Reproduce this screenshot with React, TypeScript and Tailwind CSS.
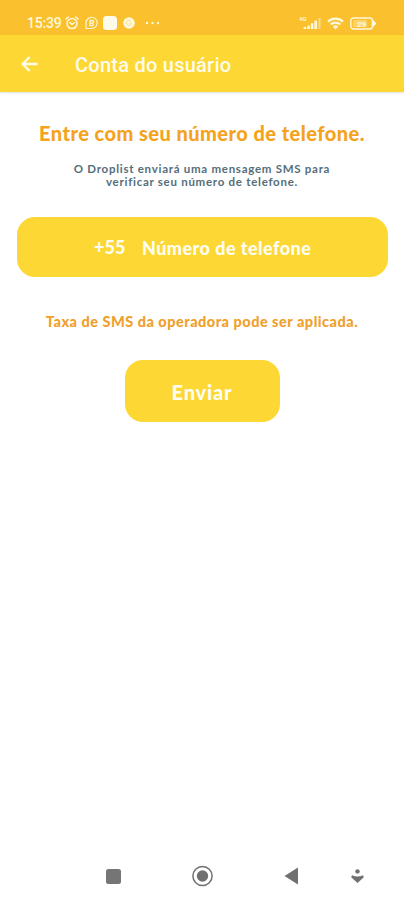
import React from 'react';

function StatusBar() {
  return (
    <div className="flex h-[35px] items-start justify-between bg-[#fbc02d] pl-[27px] pr-[27px] pt-[14px] text-[#fff8dc]">
      <div className="flex h-[18px] items-center">
        <span className="w-[35px] whitespace-nowrap font-['Roboto',sans-serif] text-[14px] font-medium leading-[18px] tracking-[-0.2px]">15:39</span>
        {/* alarm */}
        <svg className="ml-[3px] h-[14px] w-[14px]" viewBox="0 0 14 14" fill="none" stroke="currentColor" strokeWidth="1.5" strokeLinecap="round">
          <circle cx="7" cy="7.6" r="5" />
          <path d="M1 3 3.3 1M13 3 10.7 1M4.8 6.6 7 8.4 9.3 6.8" />
        </svg>
        {/* chat bubble */}
        <svg className="ml-[6px] h-[14px] w-[13px]" viewBox="0 0 13 14" fill="none" stroke="currentColor" strokeWidth="1.1">
          <path d="M1 12.5V7A5.6 5.6 0 1 1 6.6 12.5Z" />
          <path d="M5 10V4.5H7.2A1.3 1.3 0 0 1 7.2 7.2H5M7.2 7.2A1.3 1.3 0 0 1 7.2 9.7H5" strokeWidth="1.3" />
        </svg>
        <span className="ml-[5px] h-[14px] w-[14px] rounded-[3.5px] bg-[#fffbea]" />
        <svg className="ml-[6px] h-[12px] w-[12px]" viewBox="0 0 12 12">
          <circle cx="6" cy="6" r="5.8" fill="#fff8dc" />
          <path d="M8 4.3A2.6 2.6 0 1 0 8.4 6.5H6.2" fill="none" stroke="#fddf8c" strokeWidth="1" />
        </svg>
        <svg className="ml-[10px] h-[4px] w-[15px]" viewBox="0 0 15 4" fill="currentColor">
          <circle cx="2" cy="2" r="1.2" />
          <circle cx="7.5" cy="2" r="1.2" />
          <circle cx="13" cy="2" r="1.2" />
        </svg>
      </div>
      <div className="flex h-[18px] items-center">
        {/* signal */}
        <svg className="h-[14px] w-[23px]" viewBox="0 0 23 14" fill="currentColor">
          <text x="0" y="5.4" fontSize="6" fontFamily="Roboto, sans-serif">4G</text>
          <rect x="4.6" y="11" width="2.6" height="2" rx=".6" />
          <rect x="8.2" y="9.4" width="2.6" height="3.6" rx=".6" />
          <rect x="11.8" y="7.2" width="2.6" height="5.8" rx=".6" />
          <rect x="15.4" y="4.6" width="2.6" height="8.4" rx=".6" />
          <rect x="19.4" y="2" width="2.2" height="11" rx=".6" opacity=".45" />
        </svg>
        <svg className="ml-[5px] h-[13px] w-[17px]" viewBox="0 0 17 13" fill="none" stroke="currentColor" strokeWidth="2.2">
          <path d="M1 4.6A11 11 0 0 1 16 4.6M3.7 7.5A7 7 0 0 1 13.3 7.5" />
          <path d="M5.7 9.4A4.3 4.3 0 0 1 11.3 9.4L8.5 12.6Z" fill="currentColor" stroke="none" />
        </svg>
        <svg className="ml-[6px] h-[13px] w-[27px]" viewBox="0 0 27 13">
          <rect x=".9" y="1" width="21.5" height="11" rx="2.5" fill="none" stroke="currentColor" strokeWidth="1.4" />
          <path d="M23 2.8 26.4 6.5 23 10.2Z" fill="currentColor" />
          <rect x="3" y="3" width="14" height="7" rx="1" fill="currentColor" opacity=".35" />
          <text x="7" y="9.5" fontSize="8" fontWeight="700" fontFamily="Roboto, sans-serif" fill="currentColor">29</text>
        </svg>
      </div>
    </div>
  );
}

function Header() {
  return (
    <header className="flex h-[57px] items-center bg-[#fdd835] pl-[21px] text-[#fffbea] shadow-[0_1px_2px_rgba(0,0,0,0.12)]">
      <svg className="h-[16px] w-[17px]" viewBox="0 0 17 16" fill="none" stroke="currentColor" strokeWidth="2.4">
        <path d="M16.5 8H2M8.6 1 1.6 8 8.6 15" />
      </svg>
      <h1 className="ml-[37px] mt-[2px] whitespace-nowrap font-['Roboto',sans-serif] text-[20px] font-medium leading-[24px] tracking-[0.25px]">
        Conta do usuário
      </h1>
    </header>
  );
}

function NavBar() {
  return (
    <nav className="flex h-[48px] items-center pl-[106px] text-[#707070]">
      <span className="h-[15px] w-[15px] rounded-[2.5px] bg-[#757575]" />
      <svg className="ml-[71px] h-[22px] w-[22px]" viewBox="0 0 22 22">
        <circle cx="10.5" cy="11" r="9.6" fill="none" stroke="currentColor" strokeWidth="1.5" />
        <circle cx="10.5" cy="11" r="5.7" fill="currentColor" />
      </svg>
      <svg className="ml-[70px] h-[18px] w-[14px]" viewBox="0 0 14 18">
        <path d="M14 .5V17.5L.5 9Z" fill="currentColor" />
      </svg>
      <svg className="ml-[53px] h-[14px] w-[13px]" viewBox="0 0 13 14" fill="currentColor">
        <circle cx="6.5" cy="2.4" r="2.2" />
        <path d="M1 6.2Q6.5 9 12 6.2L12.8 8.2 6.5 14 .2 8.2Z" />
      </svg>
    </nav>
  );
}

export default function App() {
  return (
    <div className="flex h-[900px] w-[404px] flex-col overflow-hidden bg-white font-['Lato',sans-serif] font-bold">
      <StatusBar />
      <Header />
      <main className="flex flex-1 flex-col items-center">
        <h2 className="mt-[29px] whitespace-nowrap text-[20px] font-black leading-[24px] tracking-[0.45px] text-[#f5a31c]">
          Entre com seu número de telefone.
        </h2>
        <p className="mt-[18px] whitespace-nowrap text-center text-[11.5px] leading-[12.5px] tracking-[0.73px] text-[#546e7a]">
          O Droplist enviará uma mensagem SMS para
          <br />
          verificar seu número de telefone.
        </p>
        <div className="ml-px mt-[29px] flex h-[60px] w-[371px] items-center rounded-[18px] bg-[#fdd835] pl-[77px] text-[18px] font-black leading-[24px] text-[#fffdf0]">
          <span className="w-[48px] whitespace-nowrap">+55</span>
          <span className="mt-[1px] whitespace-nowrap tracking-[0.45px]">Número de telefone</span>
        </div>
        <p className="mt-[35px] whitespace-nowrap text-[14.5px] font-black leading-[20px] tracking-[0.5px] text-[#f0a02c]">
          Taxa de SMS da operadora pode ser aplicada.
        </p>
        <button className="mt-[28px] h-[62px] w-[155px] rounded-[18px] bg-[#fdd835] pt-[1px] text-[20px] font-black tracking-[0.8px] text-[#fffdf0]">
          Enviar
        </button>
      </main>
      <NavBar />
    </div>
  );
}
